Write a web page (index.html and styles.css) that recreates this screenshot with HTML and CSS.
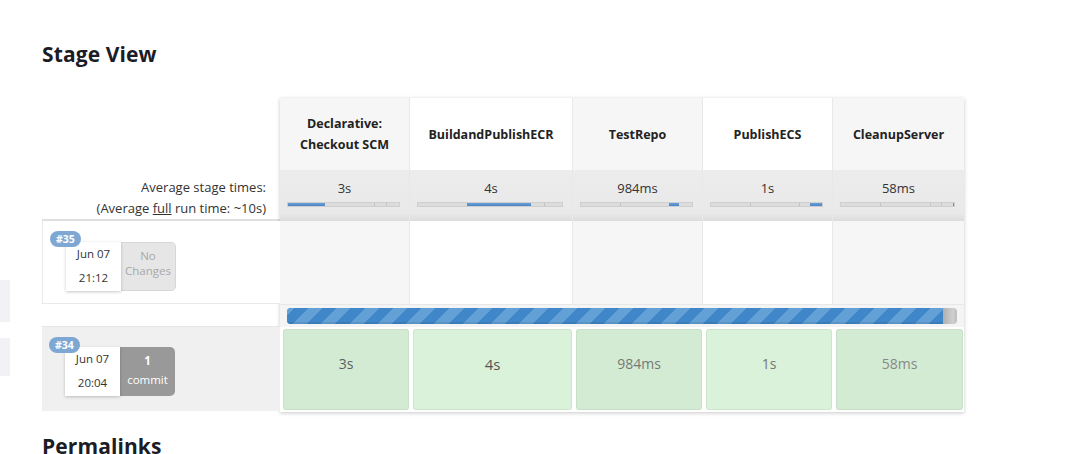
FILE: index.html
```html
<!DOCTYPE html>
<html>
<head>
<meta charset="utf-8">
<title>Stage View</title>
<link rel="stylesheet" href="styles.css">
</head>
<body>
<div class="page">
  <aside class="side">
    <div class="side-item first"></div>
    <div class="side-item second"></div>
  </aside>
  <main class="main">
    <h2 class="title">Stage View</h2>
    <div class="stage-view">
      <div class="runs">
        <div class="runs-head"></div>
        <div class="runs-avg">
          <div>Average stage times:</div>
          <div>(Average <u>full</u> run time: ~10s)</div>
        </div>
        <div class="run run-current">
          <span class="badge">#35</span>
          <div class="run-info">
            <div class="run-date"><div>Jun 07</div><div>21:12</div></div>
            <div class="run-changes none"><div>No</div><div>Changes</div></div>
          </div>
        </div>
        <div class="runs-gap"></div>
        <div class="run run-prev">
          <span class="badge">#34</span>
          <div class="run-info">
            <div class="run-date"><div>Jun 07</div><div>20:04</div></div>
            <div class="run-changes commits"><div class="count">1</div><div>commit</div></div>
          </div>
        </div>
      </div>
      <div class="stages">
        <div class="row row-head">
          <div class="cell">Declarative:<br>Checkout SCM</div>
          <div class="cell">BuildandPublishECR</div>
          <div class="cell">TestRepo</div>
          <div class="cell">PublishECS</div>
          <div class="cell">CleanupServer</div>
        </div>
        <div class="row row-avg">
          <div class="cell">
            <div class="avg-time">3s</div>
            <div class="mini-bar"><i class="seg on" style="flex:39"></i><i class="seg" style="flex:51"></i><i class="seg div" style="flex:11"></i><i class="seg div" style="flex:13"></i></div>
          </div>
          <div class="cell">
            <div class="avg-time">4s</div>
            <div class="mini-bar"><i class="seg" style="flex:50"></i><i class="seg on" style="flex:65"></i><i class="seg" style="flex:14"></i><i class="seg div" style="flex:17"></i></div>
          </div>
          <div class="cell">
            <div class="avg-time">984ms</div>
            <div class="mini-bar"><i class="seg" style="flex:40"></i><i class="seg div" style="flex:50"></i><i class="seg on" style="flex:11"></i><i class="seg" style="flex:13"></i></div>
          </div>
          <div class="cell">
            <div class="avg-time">1s</div>
            <div class="mini-bar"><i class="seg" style="flex:40"></i><i class="seg div" style="flex:50"></i><i class="seg div" style="flex:11"></i><i class="seg on" style="flex:12"></i></div>
          </div>
          <div class="cell">
            <div class="avg-time">58ms</div>
            <div class="mini-bar"><i class="seg" style="flex:40"></i><i class="seg div" style="flex:50"></i><i class="seg div" style="flex:11"></i><i class="seg div" style="flex:11"></i><i class="seg on" style="flex:1"></i></div>
          </div>
        </div>
        <div class="row row-empty">
          <div class="cell"></div>
          <div class="cell"></div>
          <div class="cell"></div>
          <div class="cell"></div>
          <div class="cell"></div>
        </div>
        <div class="row-progress">
          <div class="progress"><div class="progress-fill"></div><div class="progress-rest"></div></div>
        </div>
        <div class="row row-done">
          <div class="cell"><div class="stage-box dark">3s</div></div>
          <div class="cell"><div class="stage-box light big">4s</div></div>
          <div class="cell"><div class="stage-box dark muted">984ms</div></div>
          <div class="cell"><div class="stage-box light muted">1s</div></div>
          <div class="cell"><div class="stage-box dark faint">58ms</div></div>
        </div>
      </div>
    </div>
    <h2 class="title permalinks">Permalinks</h2>
  </main>
</div>
</body>
</html>
```

FILE: styles.css
```css
* { box-sizing: border-box; }

html, body {
  margin: 0;
  padding: 0;
  background: #fff;
  overflow: hidden;
}

body {
  font-family: "Open Sans", "Noto Sans", "DejaVu Sans", sans-serif;
  color: #333;
  height: 454px;
}

.page {
  display: flex;
}

.side {
  width: 10px;
  flex: none;
}

.side-item {
  background: #f2f2f6;
}

.side-item.first {
  margin-top: 280px;
  height: 42px;
}

.side-item.second {
  margin-top: 16px;
  height: 38px;
}

.main {
  padding-left: 32px;
  padding-top: 40px;
}

.title {
  margin: 0;
  font-size: 21px;
  line-height: 28px;
  font-weight: 700;
  color: #1c1c26;
  letter-spacing: 0.1px;
}

.stage-view {
  display: flex;
  margin-top: 30px;
}

.permalinks {
  margin-top: 20px;
}

/* left column */
.runs {
  width: 238px;
  flex: none;
}

.runs-head {
  height: 72px;
}

.runs-avg {
  height: 51px;
  padding: 7px 14px 0 0;
  text-align: right;
  font-size: 13px;
  line-height: 21px;
  color: #333;
  border-bottom: 2px solid #e0e0e0;
}

.runs-avg u {
  text-decoration-thickness: 1px;
}

.run {
  position: relative;
  height: 83px;
  padding: 21px 0 0 23px;
}

.run-current {
  background: #fff;
  border-left: 1px solid #eaeaea;
  border-bottom: 1px solid #eaeaea;
}

.runs-gap {
  height: 22px;
}

.run-prev {
  height: 85px;
  background: #f0f0f0;
  border-top: 1px solid #e6e6e6;
  padding-top: 20px;
}

.badge {
  position: absolute;
  left: 7px;
  top: 10px;
  height: 16px;
  padding: 0 6px;
  border-radius: 8px;
  background: #7ea7d4;
  color: #fff;
  font-size: 10.5px;
  font-weight: 700;
  line-height: 16px;
  z-index: 2;
}

.run-info {
  display: flex;
}

.run-date {
  width: 55px;
  height: 49px;
  background: #fff;
  box-shadow: 0 1px 3px rgba(0, 0, 0, 0.22);
  text-align: center;
  font-size: 11.5px;
  line-height: 24px;
  color: #333;
  position: relative;
  z-index: 1;
}

.run-changes {
  width: 55px;
  height: 49px;
  border-radius: 0 5px 5px 0;
  text-align: center;
  font-size: 11.5px;
}

.run-changes.none {
  background: #e6e6e6;
  border: 1px solid #d6d6d6;
  border-left: none;
  color: #a8a8a8;
  padding-top: 5px;
  line-height: 15px;
}

.run-changes.commits {
  background: #999999;
  color: #fff;
  padding-top: 4px;
  line-height: 19px;
}

.run-changes .count {
  font-weight: 700;
}

/* stage table */
.stages {
  width: 684px;
  flex: none;
  box-shadow: 0 1px 4px rgba(0, 0, 0, 0.22);
  background: #fff;
}

.row {
  display: grid;
  grid-template-columns: 130px 163px 130px 130px 131px;
}

.cell {
  border-right: 1px solid #e8e8e8;
  text-align: center;
}

.cell:last-child {
  border-right: none;
}

.row-head .cell {
  height: 72px;
  display: flex;
  align-items: center;
  justify-content: center;
  font-size: 12.5px;
  font-weight: 700;
  line-height: 21px;
  color: #222;
}

.row-head .cell:nth-child(odd),
.row-empty .cell:nth-child(odd) {
  background: #f6f6f6;
}

.row-avg .cell {
  height: 51px;
  background: linear-gradient(#ececec, #e9e9e9 85%, #dcdcdc);
  padding-top: 9px;
}

.avg-time {
  font-size: 13px;
  line-height: 18px;
  color: #333;
}

.mini-bar {
  display: flex;
  height: 5px;
  margin: 5px 9px 0 7px;
  background: #dadada;
  border: 1px solid #cfcfcf;
}

.seg {
  display: block;
  height: 100%;
  background: #dcdcdc;
}

.seg.div {
  border-left: 1px solid #c4c4c4;
}

.seg.on {
  background: linear-gradient(#6b9fd8, #4a84c6);
}

.row-empty .cell {
  height: 84px;
  border-bottom: 1px solid #e8e8e8;
}

.row-progress {
  height: 22px;
  padding: 3px 7px 0 7px;
  background: #f4f4f4;
}

.progress {
  display: flex;
  height: 16px;
  border-radius: 4px;
  overflow: hidden;
}

.progress-fill {
  flex: 1;
  background-color: #3f87c8;
  background-image: repeating-linear-gradient(
    -45deg,
    #3f87c8 0,
    #3f87c8 10px,
    #63a0d6 10px,
    #63a0d6 20px
  );
  box-shadow: inset 0 -2px 0 rgba(0, 0, 0, 0.08);
}

.progress-rest {
  width: 14px;
  background: linear-gradient(90deg, #b0b0b0, #cfcfcf 70%, #bdbdbd);
}

.row-done .cell {
  height: 85px;
  padding: 2px 1px 2px 3px;
  border-right: none;
}

.stage-box {
  height: 81px;
  border-radius: 3px;
  border: 1px solid rgba(0, 0, 0, 0.05);
  padding-top: 23px;
  font-size: 14px;
  line-height: 22px;
  color: #5e5e5e;
}

.stage-box.dark { background: #d3ebd3; }
.stage-box.light { background: #d9f2d9; }
.stage-box.big { font-size: 15px; color: #555; }
.stage-box.muted { color: #777; }
.stage-box.faint { color: #888; }
```
